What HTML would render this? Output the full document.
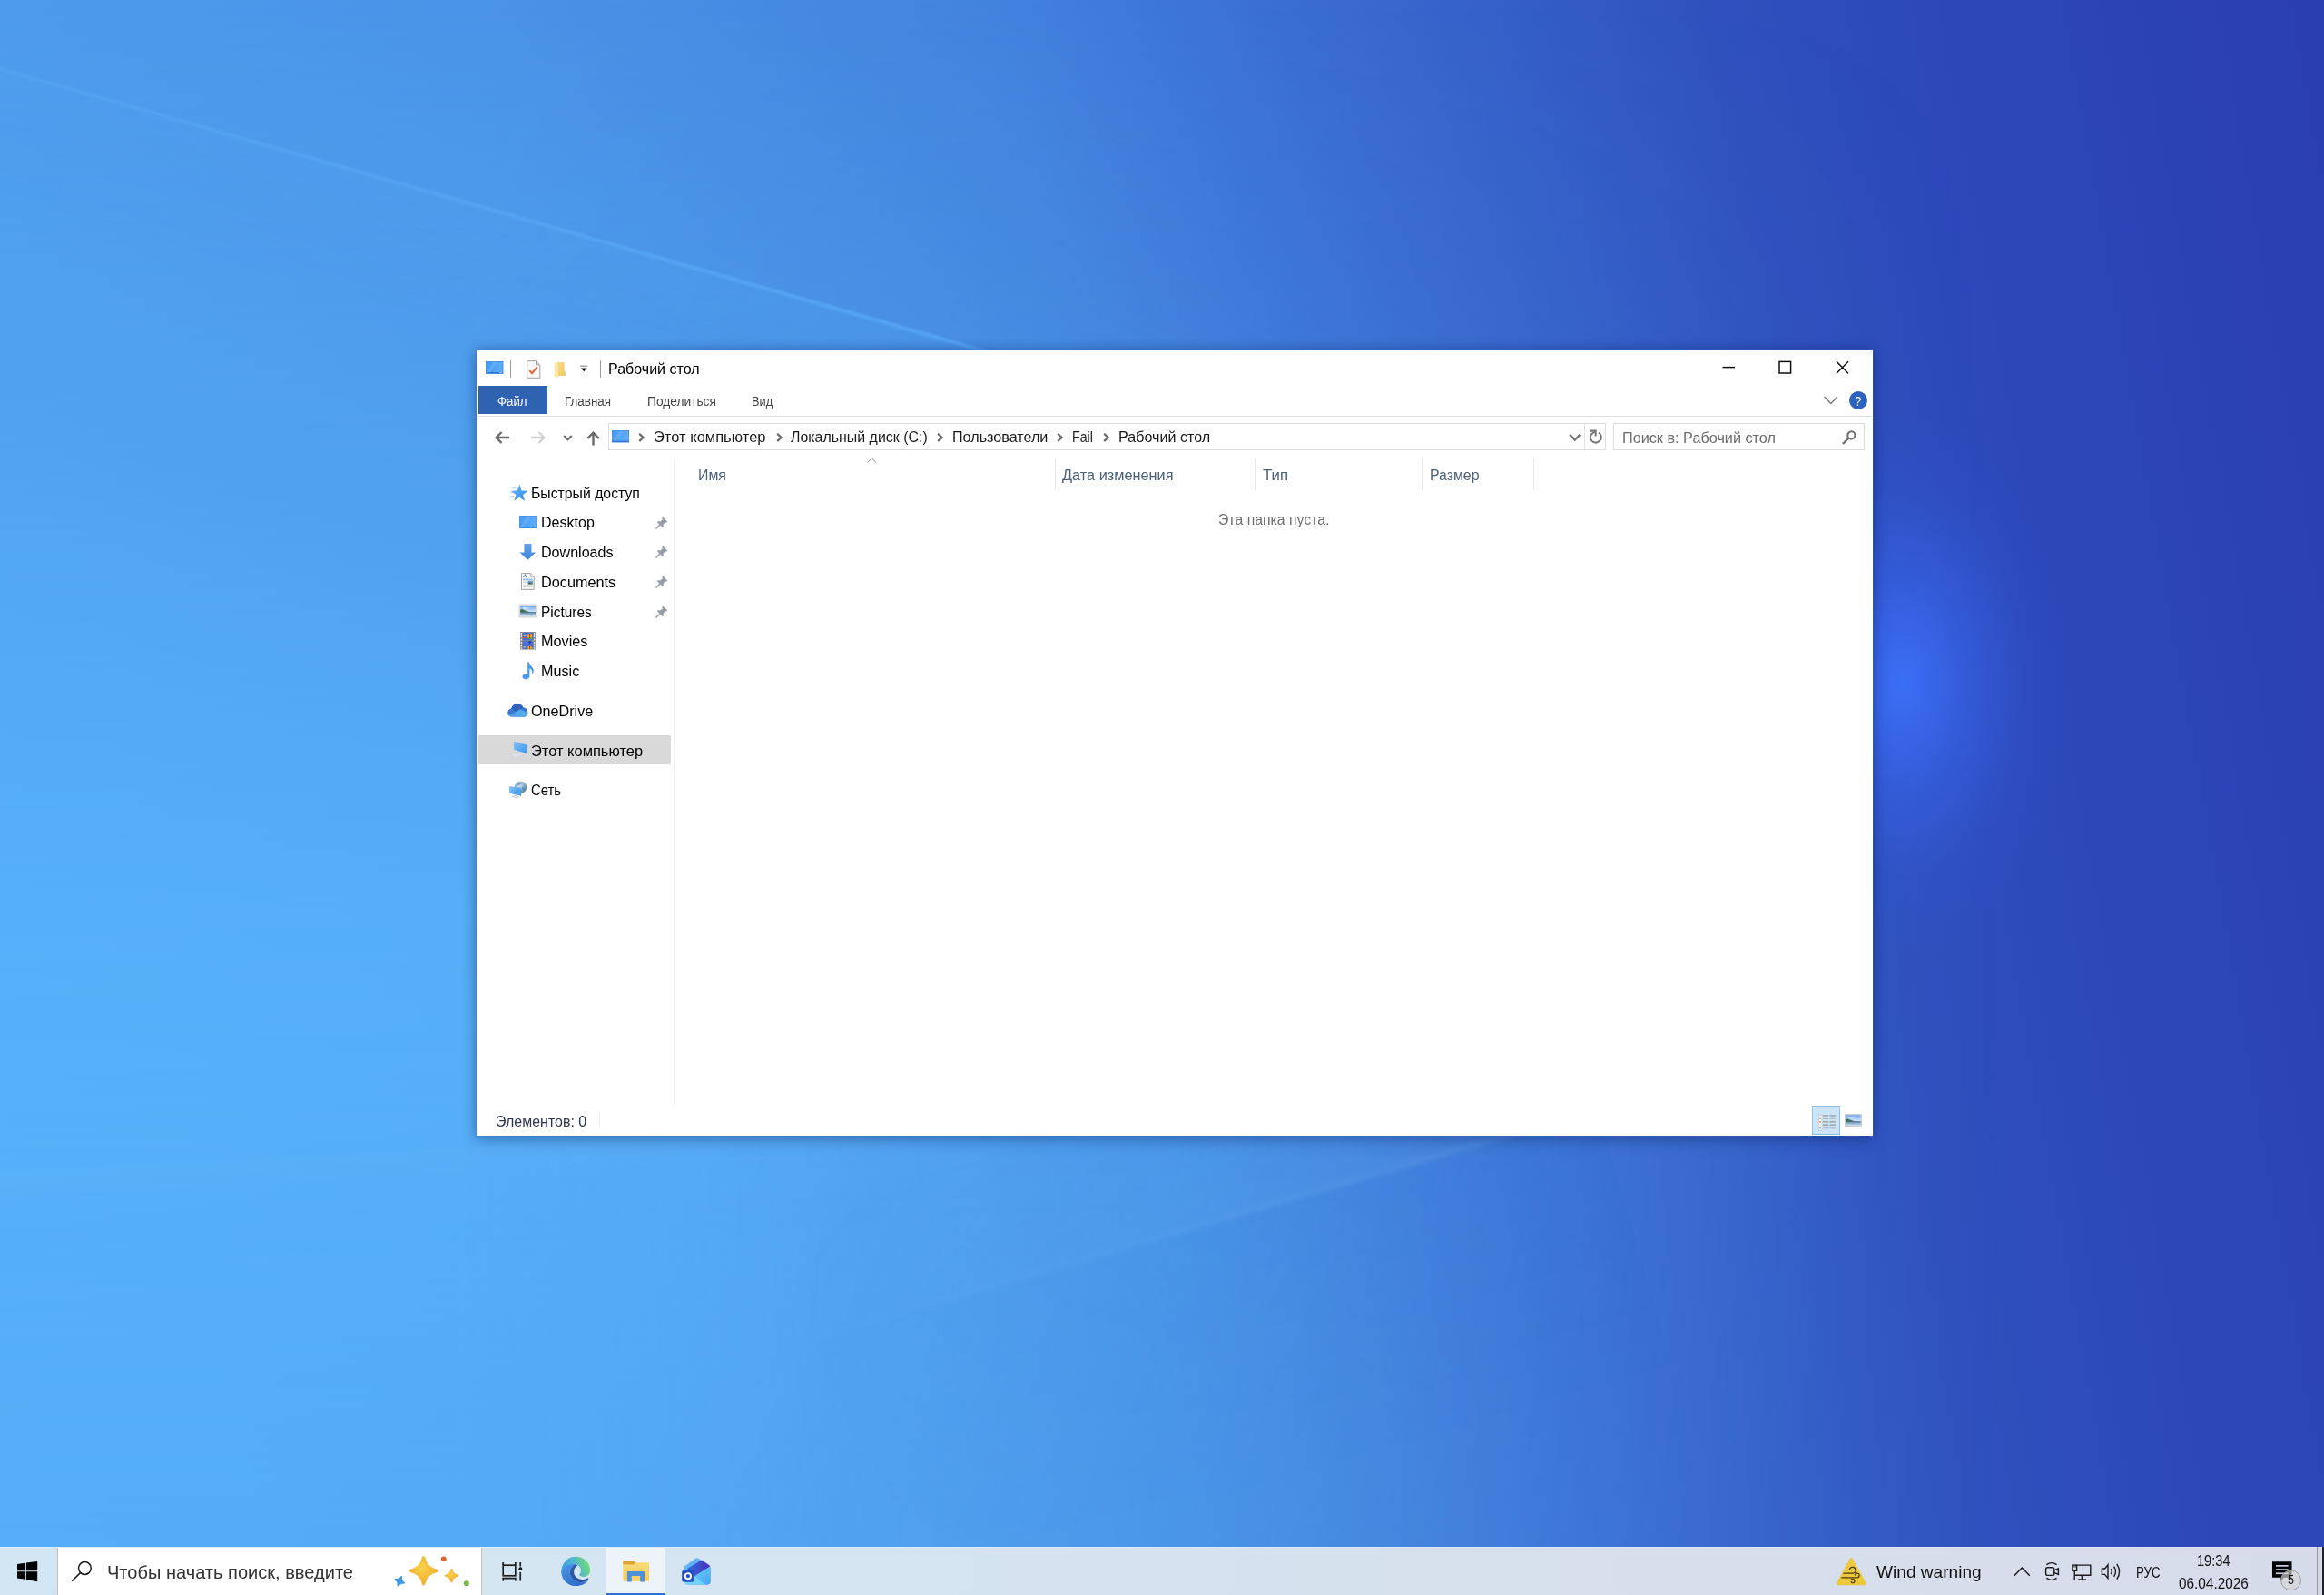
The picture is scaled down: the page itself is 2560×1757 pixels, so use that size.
<!DOCTYPE html>
<html lang="ru">
<head>
<meta charset="utf-8">
<title>Рабочий стол</title>
<style>
*{box-sizing:border-box;margin:0;padding:0}
html,body{width:2560px;height:1757px;overflow:hidden}
body{font-family:"Liberation Sans",sans-serif;position:relative;background:#3f7fdc;color:#000}
.a{position:absolute}
.t{position:absolute;white-space:nowrap;line-height:1;transform-origin:0 50%}
svg{position:absolute;overflow:visible}

/* ---------- wallpaper ---------- */
#wall{position:absolute;left:0;top:0;width:2560px;height:1757px;overflow:hidden;
 background:linear-gradient(80deg,#4e9dee 0%,#4d9bed 10%,#4a93e8 30%,#4283de 49%,#3b70d2 59%,#3560c8 68%,#2f50be 77%,#2c46b8 87%,#2a3eb2 100%)}
#lift{position:absolute;left:0;top:0;width:2560px;height:1757px;
 background:linear-gradient(to bottom,rgba(92,188,255,0) 0,rgba(92,188,255,.27) 500px,rgba(92,188,255,.62) 1000px,rgba(92,188,255,.64) 1200px,rgba(92,188,255,.50) 1757px);
 -webkit-mask-image:linear-gradient(to right,#000 0,#000 500px,rgba(0,0,0,.9) 750px,rgba(0,0,0,.72) 1050px,rgba(0,0,0,.47) 1400px,rgba(0,0,0,.28) 1700px,rgba(0,0,0,.05) 2050px,transparent 2200px);
 mask-image:linear-gradient(to right,#000 0,#000 500px,rgba(0,0,0,.9) 750px,rgba(0,0,0,.72) 1050px,rgba(0,0,0,.47) 1400px,rgba(0,0,0,.28) 1700px,rgba(0,0,0,.05) 2050px,transparent 2200px)}
#spot{position:absolute;left:1800px;top:400px;width:600px;height:800px;
 background:radial-gradient(ellipse 185px 300px at 296px 352px,rgba(60,112,250,.95) 0%,rgba(56,102,238,.55) 38%,rgba(50,90,220,.18) 72%,rgba(50,90,220,0) 100%)}
#ray1{position:absolute;left:-10px;top:69px;width:1150px;height:140px;transform-origin:0 0;transform:rotate(16.0deg);
 background:linear-gradient(to bottom,rgba(90,175,255,0) 0,rgba(96,180,255,.58) 3.5px,rgba(96,180,255,.12) 8px,rgba(110,185,255,.04) 60px,rgba(110,180,255,0) 140px);
 -webkit-mask-image:linear-gradient(to right,rgba(0,0,0,.45) 0,rgba(0,0,0,.7) 50%,#000 85%,#000 100%);mask-image:linear-gradient(to right,rgba(0,0,0,.45) 0,rgba(0,0,0,.7) 50%,#000 85%,#000 100%)}
#ray2{position:absolute;left:-10px;top:1290px;width:1750px;height:120px;transform-origin:0 0;transform:rotate(-3.2deg);
 background:linear-gradient(to bottom,rgba(140,205,255,0) 0,rgba(150,210,255,.05) 4px,rgba(120,190,255,.015) 40px,rgba(110,180,255,0) 120px);
 -webkit-mask-image:linear-gradient(to right,#000 0,#000 50%,transparent 100%);mask-image:linear-gradient(to right,#000 0,#000 50%,transparent 100%)}
#ray3{position:absolute;left:500px;top:1441px;width:1313px;height:450px;transform-origin:0 150px;transform:rotate(-16.3deg);
 background:linear-gradient(to bottom,rgba(130,190,255,0) 0,rgba(130,190,255,.07) 140px,rgba(150,205,255,.11) 149px,rgba(30,90,200,.07) 156px,rgba(30,90,200,0) 450px);
 -webkit-mask-image:linear-gradient(to right,transparent 0,transparent 30%,#000 85%,#000 100%);mask-image:linear-gradient(to right,transparent 0,transparent 30%,#000 85%,#000 100%)}

/* ---------- explorer window ---------- */
#win{position:absolute;left:525px;top:385px;width:1538px;height:866px;background:#fff;
 box-shadow:0 0 0 1px rgba(60,120,200,.22),0 5px 16px rgba(0,20,80,.28),0 0 10px rgba(0,20,80,.22)}
.ln{position:absolute;background:#dadbdc}

/* ---------- taskbar ---------- */
#tb{position:absolute;left:0;top:1704px;width:2560px;height:53px;
 background:linear-gradient(to right,#d3e6f3 0%,#d5e4f1 40%,#d7dfec 70%,#d6dbea 100%)}
</style>
</head>
<body>
<div id="wall"><div id="lift"></div><div id="spot"></div><div id="ray1"></div><div id="ray2"></div><div id="ray3"></div></div>
<div id="win"></div>
<div id="tb"></div>

<!-- ===== title bar ===== -->
<svg style="left:535px;top:398px" width="20" height="14" viewBox="0 0 20 14">
 <defs><linearGradient id="dk" x1="0" y1="0" x2="1" y2="0"><stop offset="0" stop-color="#479af2"/><stop offset="1" stop-color="#5eadf7"/></linearGradient></defs>
 <rect x=".4" y=".4" width="18.6" height="13" fill="url(#dk)" stroke="#3a86e2" stroke-width=".8"/><path d="M8 .8 L12.5 .8 L5.5 12 L1.5 12Z" fill="#fff" opacity=".10"/><rect x=".4" y="12" width="18.6" height="1.5" fill="#2f7ad8"/><rect x="1" y="12.3" width="1.2" height=".8" fill="#cfe4fb"/><rect x="15.2" y="12.3" width="2.6" height=".8" fill="#cfe4fb"/>
</svg>
<div class="a" style="left:562px;top:397px;width:1px;height:19px;background:#999"></div>
<svg style="left:580px;top:397px" width="16" height="20" viewBox="0 0 16 20">
 <path d="M.7 .7 H10.6 L14.8 4.9 V19.3 H.7Z" fill="#fafafa" stroke="#a2a2a2" stroke-width="1"/><path d="M10.6 .7 V4.9 H14.8" fill="#efefef" stroke="#9a9a9a" stroke-width="1"/>
 <path d="M3.2 11.2 L6 14.2 L11.8 7.2" fill="none" stroke="#e8622a" stroke-width="1.9"/>
</svg>
<svg style="left:610px;top:398px" width="14" height="19" viewBox="0 0 14 19">
 <defs><linearGradient id="fo" x1="0" y1="0" x2="1" y2="1"><stop offset="0" stop-color="#f6dc8a"/><stop offset="1" stop-color="#efc962"/></linearGradient></defs>
 <path d="M3.5 1 H11.7 V11 L12.9 11.3 V16.1 H4.2Z" fill="url(#fo)"/>
 <path d="M.8 1 L4.7 3.7 V16.1 L3.5 18.5 L.8 16.1Z" fill="#f9e6a6"/>
</svg>
<svg style="left:639px;top:402px" width="9" height="8" viewBox="0 0 9 8"><rect x="0.2" y="0.7" width="8" height="1" fill="#777"/><path d="M0.8 3.6 H7.6 L4.2 7.2Z" fill="#111"/></svg>
<div class="a" style="left:661px;top:397px;width:1px;height:19px;background:#999"></div>

<!-- caption buttons -->
<svg style="left:1897px;top:397px" width="15" height="15" viewBox="0 0 15 15"><path d="M.5 7.6 H14" stroke="#111" stroke-width="1.5" fill="none"/></svg>
<svg style="left:1959px;top:397px" width="15" height="15" viewBox="0 0 15 15"><rect x="1" y="1.4" width="12.6" height="12.6" stroke="#111" stroke-width="1.5" fill="none"/></svg>
<svg style="left:2022px;top:397px" width="15" height="15" viewBox="0 0 15 15"><path d="M1 1.2 L14 14.2 M14 1.2 L1 14.2" stroke="#111" stroke-width="1.5" fill="none"/></svg>

<!-- ===== ribbon ===== -->
<div class="a" style="left:527px;top:425px;width:76px;height:31px;background:#3062b2"></div>
<div class="ln" style="left:526px;top:458px;width:1536px;height:1px;background:#dcdcdc"></div>
<svg style="left:2009px;top:436px" width="16" height="10" viewBox="0 0 16 10"><path d="M.6 1 L7.8 8.6 L15 1" stroke="#7a7a7a" stroke-width="1.4" fill="none"/></svg>
<div class="a" style="left:2037px;top:431px;width:20px;height:20px;border-radius:50%;background:#2d63be"></div>

<!-- ===== nav row ===== -->
<svg style="left:545px;top:475px" width="17" height="14" viewBox="0 0 17 14"><path d="M16 7 H2.2 M7.6 1 L1.6 7 L7.6 13" stroke="#6a6a6a" stroke-width="2.4" fill="none"/></svg>
<svg style="left:584px;top:475px" width="17" height="14" viewBox="0 0 17 14"><path d="M1 7 H14.8 M9.4 1 L15.4 7 L9.4 13" stroke="#d2d2d2" stroke-width="2.4" fill="none"/></svg>
<svg style="left:620px;top:479px" width="11" height="7" viewBox="0 0 11 7"><path d="M1.2 1 L5.5 5.2 L9.8 1" stroke="#6a6a6a" stroke-width="2.1" fill="none"/></svg>
<svg style="left:646px;top:475px" width="15" height="16" viewBox="0 0 15 16"><path d="M7.5 15.4 V2 M1.2 8 L7.5 1.6 L13.8 8" stroke="#6a6a6a" stroke-width="2.4" fill="none"/></svg>

<div class="a" style="left:670px;top:466px;width:1099px;height:30px;border:1px solid #dddddd;background:#fff"></div>
<div class="a" style="left:1745px;top:467px;width:1px;height:28px;background:#e3e3e3"></div>
<div class="a" style="left:1777px;top:466px;width:277px;height:30px;border:1px solid #dddddd;background:#fff"></div>
<svg style="left:674px;top:474px" width="20" height="14" viewBox="0 0 20 14"><rect x=".4" y=".4" width="18.2" height="12.6" fill="url(#dk)" stroke="#3a86e2" stroke-width=".8"/><path d="M8 .8 L12.5 .8 L5.5 12 L1.5 12Z" fill="#fff" opacity=".10"/><rect x=".4" y="11.7" width="18.2" height="1.4" fill="#2f7ad8"/></svg>
<svg style="left:703.2px;top:477.4px" width="8" height="10" viewBox="0 0 8 10"><path d="M1.2 .8 L5.6 4.9 L1.2 9" stroke="#666" stroke-width="2.2" fill="none"/></svg>
<svg style="left:854.6px;top:477.4px" width="8" height="10" viewBox="0 0 8 10"><path d="M1.2 .8 L5.6 4.9 L1.2 9" stroke="#666" stroke-width="2.2" fill="none"/></svg>
<svg style="left:1031.8px;top:477.4px" width="8" height="10" viewBox="0 0 8 10"><path d="M1.2 .8 L5.6 4.9 L1.2 9" stroke="#666" stroke-width="2.2" fill="none"/></svg>
<svg style="left:1164.2px;top:477.4px" width="8" height="10" viewBox="0 0 8 10"><path d="M1.2 .8 L5.6 4.9 L1.2 9" stroke="#666" stroke-width="2.2" fill="none"/></svg>
<svg style="left:1214.9px;top:477.4px" width="8" height="10" viewBox="0 0 8 10"><path d="M1.2 .8 L5.6 4.9 L1.2 9" stroke="#666" stroke-width="2.2" fill="none"/></svg>
<svg style="left:1728px;top:477px" width="14" height="10" viewBox="0 0 14 10"><path d="M1.2 1.9 L6.8 7.6 L12.4 1.9" stroke="#727272" stroke-width="2.3" fill="none"/></svg>
<svg style="left:1750px;top:472px" width="16" height="18" viewBox="1750 472 16 18"><g stroke="#787878" stroke-width="2.05" fill="none"><path d="M1761.0 476.5 A6 6 0 1 1 1752.4 479.0 L1757.2 475.0"/><path d="M1751.9 474.6 H1757.7 V480.6"/></g></svg>
<svg style="left:2029px;top:474px" width="16" height="16" viewBox="0 0 16 16"><circle cx="10.4" cy="5.4" r="4.1" stroke="#707070" stroke-width="2.1" fill="none"/><path d="M7.4 8.6 L1 15" stroke="#707070" stroke-width="2.4"/></svg>

<!-- ===== column headers ===== -->
<svg style="left:955px;top:504px" width="11" height="6" viewBox="0 0 11 6"><path d="M.8 5.4 L5.4 .9 L10 5.4" stroke="#8a8f98" stroke-width="1" fill="none"/></svg>
<div class="a" style="left:1162px;top:504px;width:1px;height:36px;background:#e8e9ea"></div>
<div class="a" style="left:1382px;top:504px;width:1px;height:36px;background:#e8e9ea"></div>
<div class="a" style="left:1566px;top:504px;width:1px;height:36px;background:#e8e9ea"></div>
<div class="a" style="left:1689px;top:504px;width:1px;height:36px;background:#e8e9ea"></div>

<!-- ===== sidebar ===== -->
<div class="a" style="left:742px;top:504px;width:1px;height:714px;background:#f1f1f1"></div>
<div class="a" style="left:527px;top:810px;width:212px;height:32px;background:#d9d9d9"></div>

<!-- quick access star -->
<svg style="left:556px;top:533px" width="26" height="19" viewBox="0 0 26 19">
 <defs><linearGradient id="st" x1="0" y1="0" x2="1" y2="1"><stop offset="0" stop-color="#6ab8fb"/><stop offset="1" stop-color="#2f86e6"/></linearGradient>
 <linearGradient id="ml" x1="0" y1="0" x2="1" y2="0"><stop offset="0" stop-color="#9fd0fb" stop-opacity="0"/><stop offset="1" stop-color="#7dbdf7" stop-opacity=".9"/></linearGradient></defs>
 <rect x="6" y="4.2" width="6" height="1.1" fill="url(#ml)"/><rect x="3.5" y="8.8" width="6" height="1.1" fill="url(#ml)"/><rect x="5" y="13" width="5" height="1.1" fill="url(#ml)"/>
 <polygon points="16.20,0.80 18.55,7.46 25.62,7.64 20.00,11.94 22.02,18.71 16.20,14.70 10.38,18.71 12.40,11.94 6.78,7.64 13.85,7.46" fill="url(#st)"/>
</svg>
<!-- desktop -->
<svg style="left:571.7px;top:568.2px" width="20" height="14" viewBox="0 0 20 14"><rect x=".4" y=".4" width="18.6" height="13" fill="url(#dk)" stroke="#3a86e2" stroke-width=".8"/><path d="M8 .8 L13 .8 L5.5 12 L1.5 12Z" fill="#fff" opacity=".12"/><rect x=".4" y="12" width="18.6" height="1.5" fill="#2f7ad8"/><rect x="15.2" y="12.3" width="2.6" height=".8" fill="#cfe4fb"/></svg>
<!-- downloads -->
<svg style="left:572px;top:599px" width="19" height="18" viewBox="0 0 19 18">
 <defs><linearGradient id="dl" x1="0" y1="0" x2="0" y2="1"><stop offset="0" stop-color="#66a4ea"/><stop offset="1" stop-color="#3c83dd"/></linearGradient></defs>
 <path d="M5.4 0 H13.5 V9.4 H18.2 L9.4 17.8 L.3 9.4 H5.4Z" fill="url(#dl)"/>
</svg>
<!-- documents -->
<svg style="left:573.6px;top:631px" width="15" height="19" viewBox="0 0 15 19">
 <path d="M.5 .5 H10.4 L14.2 4.3 V18.4 H.5Z" fill="#fcfcfc" stroke="#a9a9a9" stroke-width="1"/><path d="M10.4 .5 V4.3 H14.2" fill="#ececec" stroke="#a9a9a9" stroke-width=".9"/>
 <path d="M2.6 5 L4.4 2 L5.6 5" stroke="#3a7bd5" stroke-width="1.1" fill="none"/><rect x="6.6" y="3" width="3" height="1" fill="#5b9be6"/>
 <rect x="2" y="6.6" width="11" height="1.2" fill="#7fb2ec"/><rect x="2" y="8.6" width="4.4" height=".8" fill="#c9c9c9"/>
 <rect x="7.4" y="8.6" width="5.8" height="3.8" fill="#6d9fd0"/><path d="M7.4 12.4 L9.6 10 L13.2 12.4Z" fill="#3e6b45"/>
 <rect x="2" y="10.4" width="4.4" height=".8" fill="#c9c9c9"/><rect x="2" y="13.4" width="11" height=".8" fill="#d0d0d0"/><rect x="2" y="15.2" width="11" height=".8" fill="#d0d0d0"/><rect x="2" y="16.9" width="11" height=".7" fill="#dcdcdc"/>
</svg>
<!-- pictures -->
<svg style="left:571.8px;top:666px" width="20" height="15" viewBox="0 0 20 15">
 <defs><linearGradient id="sky" x1="0" y1="0" x2="0" y2="1"><stop offset="0" stop-color="#6aa5ee"/><stop offset=".55" stop-color="#cfe3f6"/><stop offset=".62" stop-color="#5b86b5"/><stop offset="1" stop-color="#c9dcee"/></linearGradient></defs>
 <rect x="0" y="0" width="19.2" height="14" fill="#e4e4e4" stroke="#bdbdbd" stroke-width=".6"/>
 <rect x="1.2" y="1.2" width="16.8" height="11.6" fill="url(#sky)"/>
 <path d="M1.2 8.6 L1.2 5.6 Q3 4.4 5 6 Q8 7.6 12 8.2 L18 8.6Z" fill="#3f6f52"/>
 <path d="M4 3.4 Q6 2.4 8 3.6 Q10 3 11 4.2 L4 4.4Z" fill="#fff" opacity=".8"/>
</svg>
<!-- movies -->
<svg style="left:572.9px;top:696.2px" width="17" height="20" viewBox="0 0 17 20">
 <rect x="0" y="0" width="17" height="19.6" fill="#8f8f8f"/>
 <rect x="2.8" y="0.8" width="11.4" height="8.6" fill="#4a6fd8"/><rect x="2.8" y="10.2" width="11.4" height="8.6" fill="#4a6fd8"/>
 <g fill="#f2f2f2"><rect x=".7" y="1" width="1.3" height="1.6"/><rect x=".7" y="4.4" width="1.3" height="1.6"/><rect x=".7" y="7.8" width="1.3" height="1.6"/><rect x=".7" y="11.2" width="1.3" height="1.6"/><rect x=".7" y="14.6" width="1.3" height="1.6"/><rect x=".7" y="17.4" width="1.3" height="1.4"/>
 <rect x="15" y="1" width="1.3" height="1.6"/><rect x="15" y="4.4" width="1.3" height="1.6"/><rect x="15" y="7.8" width="1.3" height="1.6"/><rect x="15" y="11.2" width="1.3" height="1.6"/><rect x="15" y="14.6" width="1.3" height="1.6"/><rect x="15" y="17.4" width="1.3" height="1.4"/></g>
 <ellipse cx="10.6" cy="4.6" rx="2.6" ry="2.8" fill="#f5c400"/><rect x="9.9" y="2" width="1.4" height="5.2" fill="#d3242b"/><rect x="7.6" y="6.9" width="6" height="1.2" fill="#3aa845"/><rect x="3.4" y="5.8" width="3.4" height="1.4" fill="#e2462f"/><rect x="3.6" y="3.8" width="2.4" height="1" fill="#e8d85a"/>
 <path d="M9 10.6 H12.2 L10.6 13.6Z" fill="#1c2b6b"/><ellipse cx="10.6" cy="17.6" rx="2.4" ry="1.8" fill="#f5c400"/><rect x="9.9" y="16" width="1.4" height="2.8" fill="#d3242b"/><rect x="3.6" y="16.4" width="2.4" height="1" fill="#e8d85a"/>
</svg>
<!-- music -->
<svg style="left:574.6px;top:729px" width="14" height="20" viewBox="0 0 14 20">
 <path d="M6.2 .3 C7.6 .1 8.2 1 8.6 2.2 C9.4 4.4 12.6 6.4 12.8 9.6 C12.9 11.4 12.2 12.8 11 13.8 C11.8 11.4 11.2 8.8 8.4 7.2 L8.4 15.6 C8.4 18 6.6 19.4 4.2 19.4 C2 19.4 .4 18.2 .4 16.6 C.4 14.8 2.2 13.6 4.4 13.6 C5.2 13.6 5.8 13.8 6.2 14Z" fill="#4a9af0"/>
</svg>
<!-- onedrive -->
<svg style="left:559.3px;top:774.6px" width="23" height="15" viewBox="0 0 23 15">
 <path d="M5.2 14.6 C2.2 14.6 .2 12.6 .2 10 C.2 7.6 2 5.8 4.2 5.6 C5 2.4 7.8 .2 11 .2 C13.8 .2 16.2 1.8 17.4 4.2 C20.2 4.4 22.4 6.6 22.4 9.4 C22.4 12.4 20.2 14.6 17.4 14.6Z" fill="#3a78d4"/>
 <path d="M11 .2 C13.8 .2 16.2 1.8 17.4 4.2 L9.4 9 L4.2 5.6 C5 2.4 7.8 .2 11 .2Z" fill="#2f62bd"/>
 <path d="M.4 11 C.8 13.2 2.8 14.6 5.2 14.6 H17.4 C20 14.6 22 12.8 22.4 10.4 L14 6.4 L9.4 9 L4.6 11.6Z" fill="#4f9fe6"/>
 <path d="M9.4 9 L14 6.4 L22.4 10.4 C22 12.8 20 14.6 17.4 14.6 H9Z" fill="#55a9ea" opacity=".85"/>
</svg>
<!-- this pc -->
<svg style="left:559.6px;top:817px" width="22" height="20" viewBox="0 0 22 20">
 <defs><linearGradient id="mon" x1="0" y1="0" x2="1" y2="1"><stop offset="0" stop-color="#7cc2fb"/><stop offset="1" stop-color="#3c93ea"/></linearGradient></defs>
 <path d="M6.4 .3 L20.6 3.8 L20.6 13.2 L6.4 8.4Z" fill="url(#mon)" stroke="#5aa6ee" stroke-width=".5"/>
 <path d="M12.4 10.8 L15.4 11.8 L14.8 14 L11.8 13.4Z" fill="#c9ced4"/>
 <path d="M.6 14.2 L10.2 11.2 L17.6 13.4 L8.4 18.4Z" fill="#e4e6e9" stroke="#c3c7cc" stroke-width=".6"/>
 <path d="M3.4 14.6 L10.2 12.4 M5.4 15.6 L12.4 13.2 M7.4 16.8 L14.6 14" stroke="#c9ccd0" stroke-width=".5"/>
</svg>
<!-- network -->
<svg style="left:561.2px;top:860px" width="20" height="20" viewBox="0 0 20 20">
 <defs><radialGradient id="gl" cx=".4" cy=".3" r=".8"><stop offset="0" stop-color="#d6e6f4"/><stop offset=".6" stop-color="#7aa2c4"/><stop offset="1" stop-color="#47749b"/></radialGradient></defs>
 <circle cx="12.4" cy="7.2" r="6.8" fill="url(#gl)"/>
 <path d="M8.6 3.4 Q11 1.6 13.2 3 Q12 5 9.6 5.2Z M14 7 Q16.6 6.4 17.8 9 Q16 11 14.4 9.6Z" fill="#5b87ad" opacity=".8"/>
 <path d="M.4 6.4 L13 8.6 L13 16.4 L.4 13.4Z" fill="url(#mon)" stroke="#5aa6ee" stroke-width=".5"/>
 <path d="M5.6 15 L8.6 15.8 L8.4 17.6 L5.2 17Z" fill="#c5cad0"/>
 <path d="M2.6 17.2 L6.4 16.6 L11.4 17.8 L7.4 19.2Z" fill="#e1e3e6" stroke="#c3c7cc" stroke-width=".5"/>
</svg>
<svg style="left:721.5px;top:568.5px" width="14" height="14" viewBox="0 0 14 14"><path d="M8.3 .6 L13.4 5.7 L12.1 6.6 L10.6 6.3 L8.6 8.9 L8.9 11.2 L7.7 12 L2 6.3 L2.8 5.1 L5.1 5.4 L7.7 3.4 L7.4 1.9Z" fill="#979da5"/><path d="M4.9 9.1 L.5 13.5" stroke="#979da5" stroke-width="1.5"/></svg><svg style="left:721.5px;top:601.3px" width="14" height="14" viewBox="0 0 14 14"><path d="M8.3 .6 L13.4 5.7 L12.1 6.6 L10.6 6.3 L8.6 8.9 L8.9 11.2 L7.7 12 L2 6.3 L2.8 5.1 L5.1 5.4 L7.7 3.4 L7.4 1.9Z" fill="#979da5"/><path d="M4.9 9.1 L.5 13.5" stroke="#979da5" stroke-width="1.5"/></svg><svg style="left:721.5px;top:634.1px" width="14" height="14" viewBox="0 0 14 14"><path d="M8.3 .6 L13.4 5.7 L12.1 6.6 L10.6 6.3 L8.6 8.9 L8.9 11.2 L7.7 12 L2 6.3 L2.8 5.1 L5.1 5.4 L7.7 3.4 L7.4 1.9Z" fill="#979da5"/><path d="M4.9 9.1 L.5 13.5" stroke="#979da5" stroke-width="1.5"/></svg><svg style="left:721.5px;top:666.9px" width="14" height="14" viewBox="0 0 14 14"><path d="M8.3 .6 L13.4 5.7 L12.1 6.6 L10.6 6.3 L8.6 8.9 L8.9 11.2 L7.7 12 L2 6.3 L2.8 5.1 L5.1 5.4 L7.7 3.4 L7.4 1.9Z" fill="#979da5"/><path d="M4.9 9.1 L.5 13.5" stroke="#979da5" stroke-width="1.5"/></svg>


<!-- ===== status bar ===== -->
<div class="a" style="left:660px;top:1227px;width:1px;height:15px;background:#ededed"></div>
<div class="a" style="left:1996px;top:1218px;width:31px;height:32px;background:#cce4f7;border:1px solid #8fc0ea"></div>

<svg style="left:2003px;top:1226.6px" width="20" height="19" viewBox="0 0 20 19">
 <rect x=".3" y=".3" width="3.6" height="17.6" fill="#fdfdfd" stroke="#bfc3c7" stroke-width=".6"/>
 <rect x="1.4" y="1.4" width="1.4" height="1.2" fill="#7db3e8"/><rect x="1.4" y="4.9" width="1.4" height="1.2" fill="#8a9a3a"/><rect x="1.2" y="8.3" width="1.8" height="1.2" fill="#e25a2c"/><rect x="1.4" y="11.6" width="1.4" height="1.2" fill="#c8d98a"/><rect x="1.4" y="15.2" width="1.4" height="1.2" fill="#3f86c6"/>
 <g fill="#8c8c8c"><rect x="5" y="1.4" width="6" height="1.1"/><rect x="12.4" y="1.4" width="6.4" height="1.1"/><rect x="5" y="8.3" width="6" height="1.1"/><rect x="12.4" y="8.3" width="6.4" height="1.1"/><rect x="5" y="11.6" width="6" height="1.1"/><rect x="12.4" y="11.6" width="6.4" height="1.1"/></g>
 <g fill="#b4b9bd"><rect x="5" y="4.9" width="6" height="1.1"/><rect x="12.4" y="4.9" width="6.4" height="1.1"/><rect x="5" y="15.2" width="6" height="1.1"/><rect x="12.4" y="15.2" width="6.4" height="1.1"/></g>
</svg>
<svg style="left:2032px;top:1227px" width="19" height="14" viewBox="0 0 19 14">
 <rect x=".3" y=".3" width="18.4" height="13.4" fill="#e2e2e2" stroke="#b5b5b5" stroke-width=".6"/>
 <rect x="1.3" y="1.3" width="16.4" height="11.4" fill="url(#sky)"/>
 <path d="M1.3 8.8 L1.3 6 Q3.4 4.8 5.4 6.2 Q8.4 7.8 12 8.4 L17.7 8.8Z" fill="#3f6f52"/>
 <path d="M4 3.6 Q6 2.6 8 3.8 Q10 3.2 11 4.4 L4 4.6Z" fill="#fff" opacity=".8"/>
</svg>



<div class="a" style="left:0;top:1704px;width:2560px;height:1px;background:rgba(255,255,255,.25)"></div>
<!-- start -->
<svg style="left:19px;top:1719.8px" width="23" height="23" viewBox="0 0 23 23">
 <path d="M0 3 L8.7 1.8 V10.2 H0Z M9.9 1.6 L22.2 0 V10.2 H9.9Z M0 11.3 H8.7 V19.8 L0 18.6Z M9.9 11.3 H22.2 V22.2 L9.9 20Z" fill="#000"/>
</svg>
<!-- search box -->
<div class="a" style="left:63px;top:1705px;width:468px;height:52px;background:#fff;border-left:1px solid #bdbdbd;border-right:1px solid #c2c2c2"></div>
<svg style="left:78px;top:1719px" width="24" height="24" viewBox="0 0 24 24"><circle cx="15.4" cy="8.5" r="6.9" stroke="#1a1a1a" stroke-width="1.5" fill="none"/><path d="M10.4 13.6 L1.2 22.8" stroke="#1a1a1a" stroke-width="1.5"/></svg>
<svg style="left:430px;top:1708px" width="95" height="46" viewBox="430 1708 95 46">
 <defs><radialGradient id="sp" cx=".45" cy=".4" r=".7"><stop offset="0" stop-color="#f9d24a"/><stop offset="1" stop-color="#efa92e"/></radialGradient></defs>
 <path d="M466.6 1715.8999999999999 Q469.048 1727.8519999999999 481.0 1730.3 Q469.048 1732.748 466.6 1744.7 Q464.15200000000004 1732.748 452.20000000000005 1730.3 Q464.15200000000004 1727.8519999999999 466.6 1715.8999999999999Z" fill="url(#sp)" stroke="url(#sp)" stroke-width="3.4" stroke-linejoin="round"/>
 <path d="M497.5 1728.8999999999999 Q498.639 1734.461 504.2 1735.6 Q498.639 1736.7389999999998 497.5 1742.3 Q496.361 1736.7389999999998 490.8 1735.6 Q496.361 1734.461 497.5 1728.8999999999999Z" fill="url(#sp)" stroke="url(#sp)" stroke-width="2.1" stroke-linejoin="round"/>
 <g transform="rotate(22 440.3 1741.8)"><path d="M440.3 1736.6 Q441.236 1740.864 445.5 1741.8 Q441.236 1742.7359999999999 440.3 1747.0 Q439.36400000000003 1742.7359999999999 435.1 1741.8 Q439.36400000000003 1740.864 440.3 1736.6Z" fill="#3f9be8" stroke="#3f9be8" stroke-width="1.8" stroke-linejoin="round"/></g>
 <circle cx="488.8" cy="1717.3" r="2.9" fill="#e0622c"/><circle cx="513.8" cy="1744.2" r="3" fill="#7db843"/>
</svg>
<!-- task view -->
<svg style="left:552px;top:1720px" width="24" height="22" viewBox="552 1720 24 22">
 <g stroke="#1e1e1e" stroke-width="1.7" fill="none">
 <path d="M554.2 1721 V1724 M567.8 1721 V1724"/><rect x="554.2" y="1724.2" width="13.6" height="11.6"/>
 <path d="M554.2 1741.4 V1738.6 H567.8 V1741.4"/><path d="M573.2 1721 V1725.6 M573.2 1732 V1741.4"/></g>
 <circle cx="573.3" cy="1728.2" r="1.9" fill="#111"/>
</svg>
<!-- edge -->
<svg style="left:616.8px;top:1714.3px" width="33.8" height="33.8" viewBox="0 0 100 100">
 <defs>
  <linearGradient id="e1" x1="0" y1=".6" x2="1" y2=".3"><stop offset="0" stop-color="#3f9fe6"/><stop offset=".45" stop-color="#4fb4d6"/><stop offset=".8" stop-color="#66d08e"/><stop offset="1" stop-color="#80e066"/></linearGradient>
  <linearGradient id="e2" x1="0" y1="0" x2=".6" y2="1"><stop offset="0" stop-color="#4a97e6"/><stop offset="1" stop-color="#2f6ccb"/></linearGradient>
  <linearGradient id="e3" x1="0" y1="0" x2="1" y2="1"><stop offset="0" stop-color="#2f62b4"/><stop offset="1" stop-color="#27488c"/></linearGradient>
 </defs>
 <path d="M4 52 C4 24 24 2 50 2 C78 2 98 22 98 46 C98 59 90 67 78 68 C70 68 63 65 62 61 C66 57 68 52 68 47 C68 35 58 27 46 27 C28 26 10 38 4 56Z" fill="url(#e1)"/>
 <path d="M4 50 C3 78 26 98 52 98 C70 98 85 90 92 78 C84 85 74 87 66 86 C46 84 32 70 32 54 C32 42 38 32 48 27 C28 23 6 36 4 50Z" fill="url(#e2)"/>
 <path d="M48 27 C38 32 32 42 32 54 C32 70 46 84 66 86 C76 87 86 83 92 77 C94 73 91 71 88 73 C82 77 74 78 67 76 C52 73 44 62 45 51 C45 43 50 35 57 31 C54 28 51 27 48 27Z" fill="url(#e3)"/>
</svg>
<!-- explorer (active) -->
<div class="a" style="left:668px;top:1705px;width:65px;height:52px;background:rgba(255,255,255,.55)"></div>
<div class="a" style="left:668px;top:1755px;width:65px;height:2px;background:#2f6fd4"></div>
<svg style="left:686px;top:1719px" width="30" height="24" viewBox="686 1719 30 24">
 <defs><linearGradient id="fy" x1="0" y1="0" x2="0" y2="1"><stop offset="0" stop-color="#f9dc7c"/><stop offset="1" stop-color="#f5cd5c"/></linearGradient></defs>
 <path d="M686.3 1720.2 Q686.3 1719.1 687.4 1719.1 H698 L700 1721.2 H714 Q715 1721.2 715 1722.2 V1740.8 Q715 1741.8 714 1741.8 H687.4 Q686.3 1741.8 686.3 1740.8Z" fill="url(#fy)"/>
 <path d="M686.3 1720.2 Q686.3 1719.1 687.4 1719.1 H698 L700 1721.2 L698 1723.6 H686.3Z" fill="#dba634"/>
 <path d="M690.9 1731.8 Q690.9 1731 691.7 1731 H709.2 Q710 1731 710 1731.8 V1742.6 H705.1 V1735.9 H695.8 V1742.6 H690.9Z" fill="#4f91d8"/>
</svg>
<!-- outlook -->
<svg style="left:750.6px;top:1716px" width="32" height="30" viewBox="0 0 32 30">
 <defs>
  <linearGradient id="o1" x1="0" y1="0" x2="1" y2="1"><stop offset="0" stop-color="#5bc0f8"/><stop offset="1" stop-color="#7a8cf4"/></linearGradient>
  <linearGradient id="o2" x1="0" y1="0" x2="1" y2="0"><stop offset="0" stop-color="#2f6fe0"/><stop offset="1" stop-color="#4a2fb8"/></linearGradient>
  <linearGradient id="o3" x1="0" y1="0" x2="1" y2="1"><stop offset="0" stop-color="#6ad4fb"/><stop offset="1" stop-color="#4aa3f0"/></linearGradient>
 </defs>
 <path d="M3 9.4 L15 .8 Q16.6 -.2 18.2 .8 L30 8.6 Q31.6 9.8 31.6 11.6 V26 Q31.6 29.6 28 29.6 H6 Q3 29.6 3 26Z" fill="url(#o1)"/>
 <path d="M6 12 L22 2.4 L30.4 8.2 Q31.4 9 30.2 10 L13 21Z" fill="url(#o2)"/>
 <path d="M13 21 L30.6 10 Q31.6 9.6 31.6 11.6 V26 Q31.6 29.6 28 29.6 H10Z" fill="url(#o3)"/>
 <path d="M3 22 L14 20.4 L26 29.6 H6 Q3 29.6 3 26Z" fill="#72d4fb"/>
 <rect x=".2" y="13.6" width="13.4" height="13.2" rx="2.4" fill="#2450c4"/>
 <circle cx="6.9" cy="20.2" r="3.1" fill="none" stroke="#fff" stroke-width="1.9"/>
</svg>

<!-- weather -->
<svg style="left:2022px;top:1715px" width="35" height="32" viewBox="2022 1715 35 32">
 <path d="M2039.2 1718 L2053.9 1744.4 H2024.9Z" fill="#edc83c" stroke="#edc83c" stroke-width="3.6" stroke-linejoin="round"/>
 <g stroke="#4b3d12" stroke-width="1.3" fill="none" stroke-linecap="round">
  <path d="M2030.9 1733.2 H2040.6 A3.4 3.4 0 1 0 2037.3 1729.4"/>
  <path d="M2028.7 1737.8 H2045.6 A2.4 2.4 0 1 0 2043.4 1734.8"/>
  <path d="M2039.4 1739.6 H2041 A2 2 0 1 1 2039.2 1742.4"/>
 </g>
</svg>
<!-- tray -->
<svg style="left:2218px;top:1726px" width="19" height="11" viewBox="2218 1726 19 11"><path d="M2218.8 1735.8 L2227.3 1727 L2235.8 1735.8" stroke="#1a1a1a" stroke-width="1.5" fill="none"/></svg>
<svg style="left:2252px;top:1720px" width="17" height="22" viewBox="2252 1720 17 22">
 <g stroke="#1a1a1a" stroke-width="1.4" fill="none"><rect x="2253.6" y="1726.8" width="9.2" height="8.6" rx="2"/><path d="M2262.8 1729.8 L2267.4 1727.8 V1734.4 L2262.8 1732.4"/>
 <path d="M2254.4 1723.6 Q2260 1719.6 2265.6 1723.6 M2254.4 1738.4 Q2260 1742.4 2265.6 1738.4"/></g>
</svg>
<svg style="left:2282px;top:1723px" width="22" height="18" viewBox="2282 1723 22 18">
 <g stroke="#1a1a1a" stroke-width="1.4" fill="none"><path d="M2287.6 1724.1 H2302.8 V1735.2 H2285.6"/><rect x="2282.9" y="1724.1" width="4.7" height="6.2"/><path d="M2285.2 1730.3 V1740.6 M2293.3 1735.2 V1739.8 M2289.2 1739.9 H2297.8"/></g>
 <rect x="2283.6" y="1724.8" width="3.3" height="1.8" fill="#1a1a1a" opacity=".55"/>
</svg>
<svg style="left:2314px;top:1721px" width="23" height="20" viewBox="2314 1721 23 20">
 <g stroke="#1a1a1a" stroke-width="1.4" fill="none"><path d="M2315.4 1728 H2318.6 L2322 1723.8 V1738.6 L2318.6 1734.4 H2315.4Z"/>
 <path d="M2325.4 1728.2 Q2327.4 1731.2 2325.4 1734.2 M2328.6 1725.6 Q2332.4 1731.2 2328.6 1736.8 M2331.8 1722.8 Q2337.4 1731.2 2331.8 1739.6"/></g>
</svg>
<!-- action center -->
<svg style="left:2502px;top:1719px" width="36" height="36" viewBox="2502 1719 36 36">
 <path d="M2503 1720.2 H2524.5 V1737.8 H2516 L2512.2 1741.6 V1737.8 H2503Z" fill="#000"/>
 <g fill="#c9cee0"><rect x="2507" y="1724" width="13.6" height="1.7"/><rect x="2507" y="1728.2" width="13.6" height="1.7"/><rect x="2507" y="1732.4" width="13.6" height="1.7"/></g>
 <circle cx="2523.5" cy="1740.8" r="10.9" fill="rgba(214,214,214,.66)" stroke="#9c9c9c" stroke-width="1"/>
</svg>
<div class="a" style="left:2552px;top:1704px;width:1px;height:53px;background:#9599a3"></div>
<div class="a" style="left:2557.5px;top:1704px;width:3px;height:53px;background:#20232c"></div>

<span class="t" style="left:670.0px;top:398.5px;font-size:15.8px;color:#000;transform:scaleX(1.0144);">Рабочий стол</span>
<span class="t" style="left:548.3px;top:435.5px;font-size:13.8px;color:#fff;transform:scaleX(0.9610);">Файл</span>
<span class="t" style="left:622.2px;top:435.5px;font-size:13.8px;color:#444;transform:scaleX(0.9730);">Главная</span>
<span class="t" style="left:712.5px;top:435.5px;font-size:13.8px;color:#444;transform:scaleX(0.9962);">Поделиться</span>
<span class="t" style="left:827.9px;top:435.5px;font-size:13.8px;color:#444;transform:scaleX(0.9252);">Вид</span>
<span class="t" style="left:719.8px;top:473.8px;font-size:15.8px;color:#1a1a1a;transform:scaleX(1.0455);">Этот компьютер</span>
<span class="t" style="left:870.9px;top:473.8px;font-size:15.8px;color:#1a1a1a;transform:scaleX(1.0080);">Локальный диск (C:)</span>
<span class="t" style="left:1048.6px;top:473.8px;font-size:15.8px;color:#1a1a1a;transform:scaleX(1.0222);">Пользователи</span>
<span class="t" style="left:1181.4px;top:473.8px;font-size:15.8px;color:#1a1a1a;transform:scaleX(0.8952);">Fail</span>
<span class="t" style="left:1232.0px;top:473.8px;font-size:15.8px;color:#1a1a1a;transform:scaleX(1.0205);">Рабочий стол</span>
<span class="t" style="left:1786.5px;top:474.6px;font-size:15.8px;color:#6d6d6d;transform:scaleX(1.0274);">Поиск в: Рабочий стол</span>
<span class="t" style="left:768.6px;top:515.8px;font-size:15.8px;color:#4c607a;transform:scaleX(1.0071);">Имя</span>
<span class="t" style="left:1170.4px;top:515.8px;font-size:15.8px;color:#4c607a;transform:scaleX(1.0320);">Дата изменения</span>
<span class="t" style="left:1391.0px;top:515.8px;font-size:15.8px;color:#4c607a;transform:scaleX(1.0629);">Тип</span>
<span class="t" style="left:1575.3px;top:515.8px;font-size:15.8px;color:#4c607a;transform:scaleX(1.0037);">Размер</span>
<span class="t" style="left:1341.5px;top:564.9px;font-size:15.8px;color:#6d6d6d;transform:scaleX(1.0014);">Эта папка пуста.</span>
<span class="t" style="left:585.3px;top:535.7px;font-size:15.8px;color:#000;transform:scaleX(0.9993);">Быстрый доступ</span>
<span class="t" style="left:596.4px;top:568.1px;font-size:15.8px;color:#000;transform:scaleX(1.0146);">Desktop</span>
<span class="t" style="left:596.4px;top:600.9px;font-size:15.8px;color:#000;transform:scaleX(1.0172);">Downloads</span>
<span class="t" style="left:596.4px;top:633.7px;font-size:15.8px;color:#000;transform:scaleX(1.0287);">Documents</span>
<span class="t" style="left:596.4px;top:666.5px;font-size:15.8px;color:#000;transform:scaleX(0.9776);">Pictures</span>
<span class="t" style="left:596.4px;top:699.3px;font-size:15.8px;color:#000;transform:scaleX(1.0270);">Movies</span>
<span class="t" style="left:596.4px;top:732.1px;font-size:15.8px;color:#000;transform:scaleX(1.0251);">Music</span>
<span class="t" style="left:585.1px;top:775.9px;font-size:15.8px;color:#000;transform:scaleX(1.0220);">OneDrive</span>
<span class="t" style="left:585.1px;top:819.6px;font-size:15.8px;color:#000;transform:scaleX(1.0421);">Этот компьютер</span>
<span class="t" style="left:585.1px;top:863.0px;font-size:15.8px;color:#000;transform:scaleX(0.9419);">Сеть</span>
<span class="t" style="left:545.8px;top:1227.8px;font-size:15.8px;color:#2b3550;transform:scaleX(1.0120);">Элементов: 0</span>
<span class="t" style="left:118.3px;top:1723.2px;font-size:19.8px;color:#333;transform:scaleX(1.0135);">Чтобы начать поиск, введите</span>
<span class="t" style="left:2067.2px;top:1722.0px;font-size:19.0px;color:#111;transform:scaleX(1.0051);">Wind warning</span>
<span class="t" style="left:2353.4px;top:1724.5px;font-size:15.6px;color:#111;transform:scaleX(0.8516);">РУС</span>
<span class="t" style="left:2420.4px;top:1711.9px;font-size:15.9px;color:#111;transform:scaleX(0.9179);">19:34</span>
<span class="t" style="left:2400.2px;top:1736.7px;font-size:15.9px;color:#111;transform:scaleX(0.9657);">06.04.2026</span>
<span class="t" style="left:2519.6px;top:1732.9px;font-size:14.4px;color:#111;transform:scaleX(0.8733);">5</span>
<span class="t" style="left:2043.4px;top:433.5px;font-size:15.0px;color:#fff;transform:scaleX(0.8629);">?</span>
</body>
</html>
